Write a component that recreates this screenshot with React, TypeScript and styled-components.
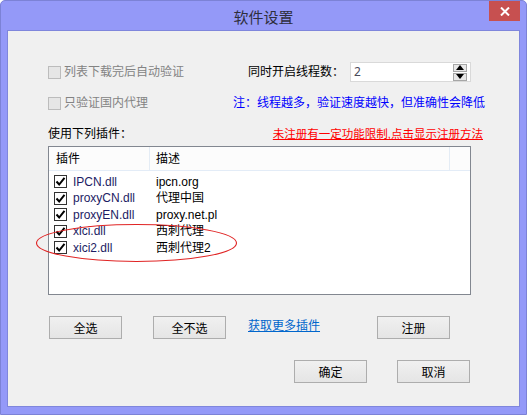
import React from "react";
import styled, { createGlobalStyle } from "styled-components";

const GlobalStyle = createGlobalStyle`
  html, body {
    margin: 0;
    padding: 0;
    background: #ffffff;
  }
  body {
    font-family: "Liberation Sans", "Noto Sans CJK SC", sans-serif;
    font-size: 12px;
    line-height: 16px;
  }
  * {
    box-sizing: border-box;
  }
`;

const Window = styled.div`
  width: 527px;
  height: 415px;
  background: #9499f8;
  border: 1px solid #7c82d6;
  border-radius: 5px 5px 0 0;
  padding: 0 6px 7px;
  display: flex;
  flex-direction: column;
`;

const TitleBar = styled.div`
  height: 29px;
  display: grid;
  grid-template-columns: 1fr auto 1fr;
  align-items: start;
`;

const Title = styled.div`
  grid-column: 2;
  font-family: "Noto Sans CJK SC", sans-serif;
  font-size: 15px;
  line-height: 29px;
  padding-top: 1px;
  color: #2e2e3c;
`;

const CloseButton = styled.div`
  grid-column: 3;
  justify-self: end;
  width: 31px;
  height: 20px;
  background: #c75050;
  display: flex;
  align-items: center;
  justify-content: center;
`;

const Client = styled.div`
  flex: 1;
  background: #f0f0f0;
  border: 1px solid #7f86dc;
  padding: 26px 36px 0 40px;
`;

const OptionRow = styled.div<{ $h: number; $mt?: number }>`
  display: grid;
  grid-template-columns: 185px 1fr;
  align-items: center;
  height: ${(p) => p.$h}px;
  margin-top: ${(p) => p.$mt ?? 0}px;
  white-space: nowrap;
`;

const CheckLabel = styled.label<{ $disabled?: boolean }>`
  display: flex;
  align-items: center;
  gap: 3px;
  color: ${(p) => (p.$disabled ? "#838383" : "#000000")};
`;

const DisabledBox = styled.span`
  width: 13px;
  height: 13px;
  border: 1px solid #bcbcbc;
  background: #e6e6e6;
`;

const RightCell = styled.div<{ $align?: string }>`
  display: flex;
  align-items: center;
  justify-content: ${(p) => p.$align ?? "flex-start"};
`;

const ThreadLabel = styled.span`
  margin-left: 15px;
  color: #000;
`;

const SpinInput = styled.div`
  width: 121px;
  height: 20px;
  margin-left: auto;
  margin-right: 12px;
  background: #ffffff;
  border: 1px solid #d9d9d9;
  display: flex;
  align-items: center;
  padding: 0 3px 0 3px;
  color: #4a4a5a;
`;

const SpinValue = styled.span`
  flex: 1;
  font-family: "Noto Sans", sans-serif;
`;

const SpinButtons = styled.div`
  display: flex;
  flex-direction: column;
  gap: 1px;
`;

const SpinArrow = styled.div`
  width: 14px;
  height: 8px;
  border: 1px solid #a6a6a6;
  background: #e8e8e8;
  display: flex;
  align-items: center;
  justify-content: center;
`;

const Note = styled.span`
  color: #0000ff;
`;

const SectionTitle = styled.span`
  color: #000;
`;

const RegisterLink = styled.span`
  color: #ff0000;
  text-decoration: underline;
  font-size: 11.5px;
  cursor: pointer;
`;

const ListBox = styled.div`
  position: relative;
  width: 423px;
  height: 149px;
  background: #ffffff;
  border: 1px solid #828790;
`;

const ListHeader = styled.div`
  height: 24px;
  display: grid;
  grid-template-columns: 101px 300px 1fr;
  background: #fcfcfc;
  border-bottom: 1px solid #e3ecf7;
`;

const HeaderCell = styled.div<{ $pad: number; $last?: boolean }>`
  display: flex;
  align-items: center;
  padding-left: ${(p) => p.$pad}px;
  border-right: ${(p) => (p.$last ? "none" : "1px solid #e4ecf5")};
  color: #000;
`;

const ListBody = styled.div`
  padding-top: 2.5px;
`;

const ListRow = styled.div`
  height: 16.5px;
  display: grid;
  grid-template-columns: 107px 1fr;
  align-items: center;
`;

const NameCell = styled.div`
  display: flex;
  align-items: center;
  gap: 6px;
  padding-left: 5px;
  color: #1c1c64;
`;

const DescCell = styled.div`
  color: #000;
`;

const CheckBox = styled.span`
  width: 13px;
  height: 13px;
  border: 1px solid #333333;
  background: #ffffff;
  display: flex;
  align-items: center;
  justify-content: center;
`;

const Marker = styled.svg`
  position: absolute;
  left: -13px;
  top: 77px;
  overflow: visible;
  pointer-events: none;
`;

const ButtonRow = styled.div<{ $end?: boolean }>`
  display: flex;
  align-items: center;
  justify-content: ${(p) => (p.$end ? "flex-end" : "flex-start")};
  margin-top: 21px;
  margin-right: ${(p) => (p.$end ? 13 : 0)}px;
  gap: ${(p) => (p.$end ? 30 : 0)}px;
`;

const Button = styled.button<{ $ml?: number }>`
  width: 73px;
  height: 23px;
  margin-left: ${(p) => p.$ml ?? 0}px;
  padding: 0;
  border: 1px solid #adadad;
  background: linear-gradient(#f0f0f0, #e5e5e5);
  font-family: "Noto Sans CJK SC", sans-serif;
  font-size: 12px;
  color: #000;
`;

const MoreLink = styled.span<{ $ml: number }>`
  width: 129px;
  margin-left: ${(p) => p.$ml}px;
  margin-top: -4px;
  color: #0066cc;
  text-decoration: underline;
  cursor: pointer;
`;

const plugins = [
  { name: "IPCN.dll", desc: "ipcn.org" },
  { name: "proxyCN.dll", desc: "代理中国" },
  { name: "proxyEN.dll", desc: "proxy.net.pl" },
  { name: "xici.dll", desc: "西刺代理" },
  { name: "xici2.dll", desc: "西刺代理2" },
];

const Check = () => (
  <svg width="11" height="11" viewBox="0 0 11 11">
    <path d="M1.5 5.5 L4.2 8.5 L9.5 1.8" fill="none" stroke="#000" strokeWidth="2" />
  </svg>
);

const Arrow = ({ up }: { up?: boolean }) => (
  <svg width="8" height="5" viewBox="0 0 8 5">
    <path d={up ? "M0 5 L4 0 L8 5 Z" : "M0 0 L4 5 L8 0 Z"} fill="#000" />
  </svg>
);

const App = () => {
  return (
    <>
      <GlobalStyle />
      <Window>
        <TitleBar>
          <Title>软件设置</Title>
          <CloseButton>
            <svg width="10" height="9" viewBox="0 0 10 9">
              <path d="M1 0.5 L9 8.5 M9 0.5 L1 8.5" stroke="#fff" strokeWidth="2" />
            </svg>
          </CloseButton>
        </TitleBar>
        <Client>
          <OptionRow $h={30}>
            <CheckLabel $disabled>
              <DisabledBox />
              列表下载完后自动验证
            </CheckLabel>
            <RightCell>
              <ThreadLabel>同时开启线程数：</ThreadLabel>
              <SpinInput>
                <SpinValue>2</SpinValue>
                <SpinButtons>
                  <SpinArrow>
                    <Arrow up />
                  </SpinArrow>
                  <SpinArrow>
                    <Arrow />
                  </SpinArrow>
                </SpinButtons>
              </SpinInput>
            </RightCell>
          </OptionRow>
          <OptionRow $h={32}>
            <CheckLabel $disabled>
              <DisabledBox />
              只验证国内代理
            </CheckLabel>
            <RightCell>
              <Note>注：线程越多，验证速度越快，但准确性会降低</Note>
            </RightCell>
          </OptionRow>
          <OptionRow $h={24} $mt={3}>
            <SectionTitle>使用下列插件：</SectionTitle>
            <RightCell $align="flex-end">
              <RegisterLink>未注册有一定功能限制,点击显示注册方法</RegisterLink>
            </RightCell>
          </OptionRow>
          <ListBox>
            <ListHeader>
              <HeaderCell $pad={7}>插件</HeaderCell>
              <HeaderCell $pad={6}>描述</HeaderCell>
              <HeaderCell $pad={0} $last />
            </ListHeader>
            <ListBody>
              {plugins.map((p) => (
                <ListRow key={p.name}>
                  <NameCell>
                    <CheckBox>
                      <Check />
                    </CheckBox>
                    {p.name}
                  </NameCell>
                  <DescCell>{p.desc}</DescCell>
                </ListRow>
              ))}
            </ListBody>
            <Marker width="201" height="38" viewBox="0 0 201 38">
              <ellipse cx="100.5" cy="19" rx="100" ry="18.5" fill="none" stroke="#e02424" strokeWidth="1.1" />
            </Marker>
          </ListBox>
          <ButtonRow>
            <Button $ml={1}>全选</Button>
            <Button $ml={31}>全不选</Button>
            <MoreLink $ml={22}>获取更多插件</MoreLink>
            <Button>注册</Button>
          </ButtonRow>
          <ButtonRow $end>
            <Button>确定</Button>
            <Button>取消</Button>
          </ButtonRow>
        </Client>
      </Window>
    </>
  );
};

export default App;
